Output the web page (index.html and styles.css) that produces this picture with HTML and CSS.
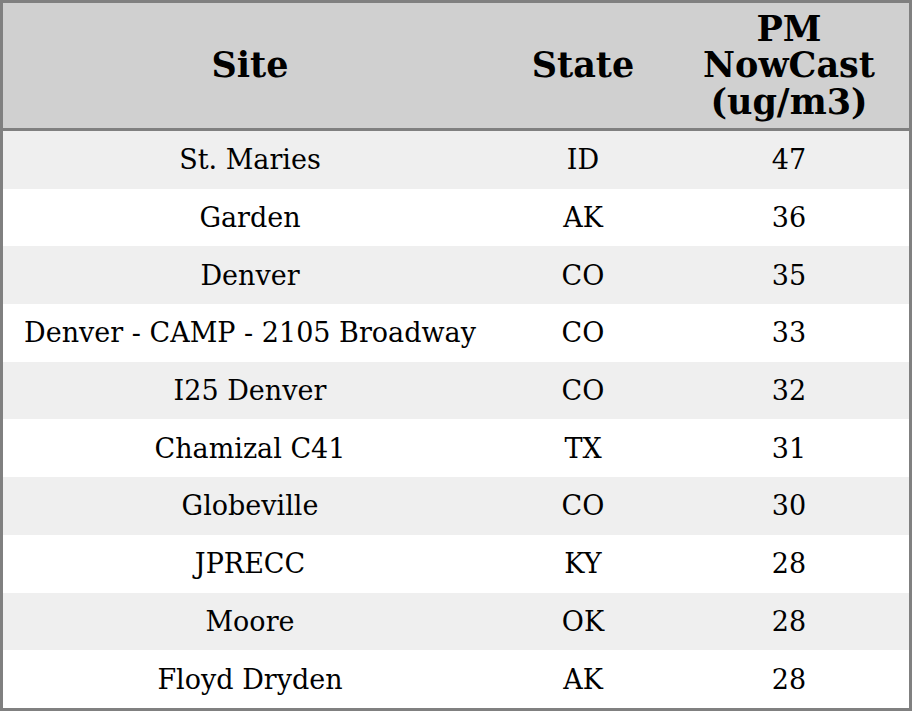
FILE: index.html
```html
<!DOCTYPE html>
<html>
<head>
<meta charset="utf-8">
<link rel="stylesheet" href="styles.css">
</head>
<body>
<table class="aq">
  <colgroup>
    <col class="c-site"><col class="c-state"><col class="c-pm">
  </colgroup>
  <thead>
    <tr><th>Site</th><th>State</th><th>PM<br>NowCast<br>(ug/m3)</th></tr>
  </thead>
  <tbody>
    <tr><td>St. Maries</td><td>ID</td><td>47</td></tr>
    <tr><td>Garden</td><td>AK</td><td>36</td></tr>
    <tr><td>Denver</td><td>CO</td><td>35</td></tr>
    <tr><td>Denver - CAMP - 2105 Broadway</td><td>CO</td><td>33</td></tr>
    <tr><td>I25 Denver</td><td>CO</td><td>32</td></tr>
    <tr><td>Chamizal C41</td><td>TX</td><td>31</td></tr>
    <tr><td>Globeville</td><td>CO</td><td>30</td></tr>
    <tr><td>JPRECC</td><td>KY</td><td>28</td></tr>
    <tr><td>Moore</td><td>OK</td><td>28</td></tr>
    <tr><td>Floyd Dryden</td><td>AK</td><td>28</td></tr>
  </tbody>
</table>
</body>
</html>
```
FILE: styles.css
```css
html, body { margin: 0; padding: 0; background: #fff; }
.aq {
  width: 912px;
  height: 711px;
  border-collapse: separate;
  border-spacing: 0;
  border: 3px solid #808080;
  box-sizing: border-box;
  font-family: "DejaVu Serif", serif;
  font-size: 27px;
  color: #000;
  table-layout: fixed;
}
.c-site { width: 494px; }
.c-state { width: 172px; }
.c-pm { width: 240px; }
.aq th {
  background: #d0d0d0;
  font-size: 35px;
  font-weight: bold;
  line-height: 36.5px;
  height: 125px;
  padding: 0;
  border-bottom: 3px solid #808080;
  text-align: center;
  vertical-align: middle;
}
.aq td {
  text-align: center;
  vertical-align: middle;
  padding: 0;
  height: 57.7px;
  white-space: nowrap;
}
.aq tbody tr:nth-child(odd) td { background: #efefef; }
```
